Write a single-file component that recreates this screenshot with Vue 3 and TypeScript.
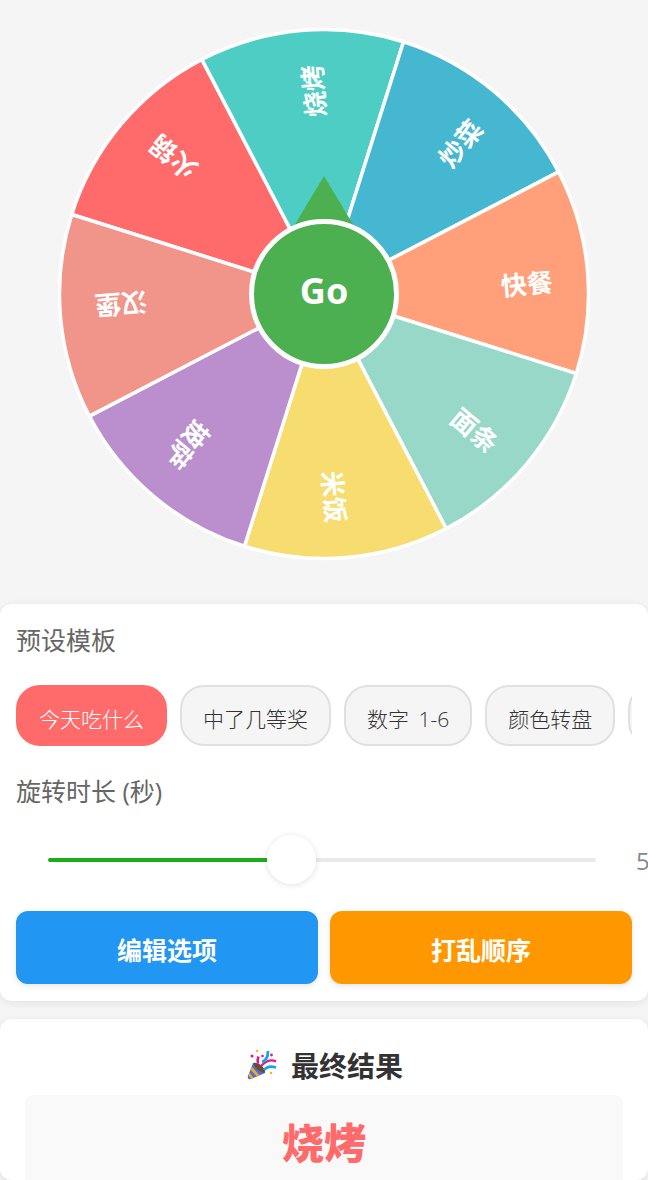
<script setup lang="ts">
// Decision wheel page: the wheel is an svg, everything below is plain flow.
interface Slice {
  label: string
  color: string
}

const CX = 267
const CY = 267
const R = 264.5
const STEP = 45
const START = -72.5 // top edge of first slice, clockwise from north

const slices: Slice[] = [
  { label: '火锅', color: '#FF6B6B' },
  { label: '烧烤', color: '#4ECDC4' },
  { label: '炒菜', color: '#45B7D1' },
  { label: '快餐', color: '#FFA07A' },
  { label: '面条', color: '#98D8C8' },
  { label: '米饭', color: '#F7DC6F' },
  { label: '披萨', color: '#BB8FCE' },
  { label: '汉堡', color: '#F1948A' },
]

function point(deg: number, r: number): string {
  const a = (deg * Math.PI) / 180
  return `${(CX + r * Math.sin(a)).toFixed(2)} ${(CY - r * Math.cos(a)).toFixed(2)}`
}

const wedges = slices.map((s, i) => {
  const from = START + i * STEP
  const to = from + STEP
  const mid = from + STEP / 2
  return {
    ...s,
    d: `M${CX} ${CY}L${point(from, R)}A${R} ${R} 0 0 1 ${point(to, R)}Z`,
    transform: `translate(${CX} ${CY}) rotate(${mid - 90})`,
  }
})

const templates = ['今天吃什么', '中了几等奖', '数字 1-6', '颜色转盘', '自定义']
</script>

<template>
  <div class="page">
    <section class="stage">
      <div class="wheel">
        <svg class="wheel-svg" width="534" height="534" viewBox="0 0 534 534">
          <path
            v-for="w in wedges"
            :key="w.label"
            :d="w.d"
            :fill="w.color"
            stroke="#fff"
            stroke-width="3.5"
            stroke-linejoin="round"
          />
          <text
            v-for="w in wedges"
            :key="w.label + '-t'"
            :transform="w.transform"
            x="203"
            y="7.5"
            class="wheel-text"
            text-anchor="middle"
            dominant-baseline="central"
          >{{ w.label }}</text>
        </svg>
        <div class="pointer" />
        <div class="go">Go</div>
      </div>
    </section>

    <section class="card controls">
      <div class="label">预设模板</div>
      <div class="chips">
        <div
          v-for="(t, i) in templates"
          :key="t"
          class="chip"
          :class="{ active: i === 0 }"
        >{{ t }}</div>
      </div>
      <div class="label duration">旋转时长 (秒)</div>
      <div class="slider">
        <div class="track">
          <div class="fill" />
          <div class="thumb" />
        </div>
        <span class="value">5</span>
      </div>
      <div class="actions">
        <div class="btn blue">编辑选项</div>
        <div class="btn orange">打乱顺序</div>
      </div>
    </section>

    <section class="card result">
      <div class="result-title">
        <svg class="popper" width="32" height="32" viewBox="0 0 32 32" role="img" aria-label="party popper">
          <path d="M7 14 L19 24 L5 30 Q1 31 2 27 Z" fill="#4a6fd8" />
          <path d="M5.8 17.5 L13.5 26.3 L10.8 27.5 L4.6 20.8 Z" fill="#f5a623" />
          <path d="M3.6 23.5 L7.6 29 L5 30 L2.6 26.6 Z" fill="#f5a623" />
          <path d="M7 14 Q12 13 16 17 Q20 21 19 24 Q14 23 11 20 Q8 17 7 14 Z" fill="#6b4a32" />
          <path d="M12 14.5 Q11 11 12.5 7.5" fill="none" stroke="#e6158c" stroke-width="2.6" />
          <path d="M15 17 Q23 9 30 12.5" fill="none" stroke="#e6158c" stroke-width="2.2" />
          <path d="M16 13 Q22 11 22 2" fill="none" stroke="#12a8e8" stroke-width="2.8" />
          <path d="M18 21 Q22 16 30 18.5" fill="none" stroke="#12a8e8" stroke-width="2.6" />
          <circle cx="11" cy="2" r="1.2" fill="#f5b81f" />
          <circle cx="6" cy="7" r="1.5" fill="#e6158c" />
          <circle cx="16.5" cy="7" r="1.3" fill="#e6158c" />
          <circle cx="25.5" cy="6" r="1.4" fill="#e6158c" />
          <circle cx="25" cy="24" r="1.3" fill="#f5b81f" />
        </svg>
        <span>最终结果</span>
      </div>
      <div class="result-box">烧烤</div>
    </section>
  </div>
</template>

<style>
html,
body {
  margin: 0;
  background: #f5f5f5;
}
</style>

<style scoped>
.page {
  width: 648px;
  height: 1180px;
  overflow: hidden;
  background: #f5f5f5;
  font-family: "Open Sans", "Noto Sans CJK SC", sans-serif;
}

.stage {
  display: flex;
  justify-content: center;
  padding: 27px 0 43px;
}

.wheel {
  position: relative;
  width: 534px;
  height: 534px;
}

.wheel-svg {
  display: block;
}

.wheel-text {
  fill: #fff;
  font-size: 26px;
  font-weight: 700;
}

.pointer {
  position: absolute;
  left: 237px;
  top: 149px;
  width: 60px;
  height: 50px;
  background: #4caf50;
  clip-path: polygon(50% 0, 100% 100%, 0 100%);
}

.go {
  position: absolute;
  left: 192px;
  top: 192px;
  box-sizing: border-box;
  width: 150px;
  height: 150px;
  padding-bottom: 7px;
  border: 5px solid #fff;
  border-radius: 50%;
  background: #4caf50;
  color: #fff;
  font-size: 36px;
  font-weight: 700;
  display: flex;
  align-items: center;
  justify-content: center;
}

.card {
  background: #fff;
  border-radius: 12px;
  box-shadow: 0 2px 10px rgba(0, 0, 0, 0.08);
}

.controls {
  box-sizing: border-box;
  height: 397px;
  padding: 20px 16px 0;
  margin-bottom: 18px;
}

.label {
  font-size: 25px;
  line-height: 32px;
  color: #666;
}

.chips {
  display: flex;
  gap: 13px;
  margin-top: 29px;
  overflow: hidden;
}

.chip {
  flex: none;
  box-sizing: border-box;
  height: 61px;
  padding: 0 21px;
  border: 2px solid #e0e0e0;
  border-radius: 24px;
  background: #f5f5f5;
  color: #333;
  font-size: 21px;
  font-weight: 300;
  line-height: 64px;
  word-spacing: 4px;
  white-space: nowrap;
}

.chip.active {
  border-color: #ff6b6b;
  background: #ff6b6b;
  color: #fff;
}

.duration {
  margin-top: 29px;
}

.slider {
  display: flex;
  align-items: center;
  height: 50px;
  margin-top: 28px;
  padding-left: 32px;
}

.track {
  position: relative;
  flex: none;
  width: 548px;
  height: 4px;
  border-radius: 2px;
  background: #e9e9e9;
}

.fill {
  width: 243px;
  height: 100%;
  border-radius: 2px;
  background: #1aad19;
}

.thumb {
  position: absolute;
  left: 219px;
  top: -23px;
  width: 49px;
  height: 49px;
  border-radius: 50%;
  background: #fff;
  box-shadow: 0 1px 6px rgba(0, 0, 0, 0.12);
}

.value {
  flex: none;
  margin-left: 40px;
  color: #888;
  font-size: 24px;
}

.actions {
  display: flex;
  gap: 12px;
  margin-top: 26px;
}

.btn {
  flex: 1;
  height: 73px;
  border-radius: 12px;
  color: #fff;
  font-size: 25px;
  font-weight: 700;
  line-height: 78px;
  text-align: center;
  box-shadow: 0 2px 6px rgba(0, 0, 0, 0.1);
}

.blue {
  background: #2196f3;
}

.orange {
  background: #ff9800;
}

.result {
  padding: 26px 25px 0;
  height: 161px;
  box-sizing: border-box;
}

.result-title {
  display: flex;
  align-items: center;
  justify-content: center;
  gap: 13px;
  height: 40px;
  padding-left: 1px;
  color: #333;
  font-size: 28px;
  font-weight: 700;
}

.popper {
  display: block;
}

.result-box {
  margin-top: 10px;
  height: 96px;
  border-radius: 8px;
  background: #f9f9f9;
  color: #ff6b6b;
  font-size: 42px;
  font-weight: 900;
  line-height: 95px;
  text-align: center;
}
</style>
